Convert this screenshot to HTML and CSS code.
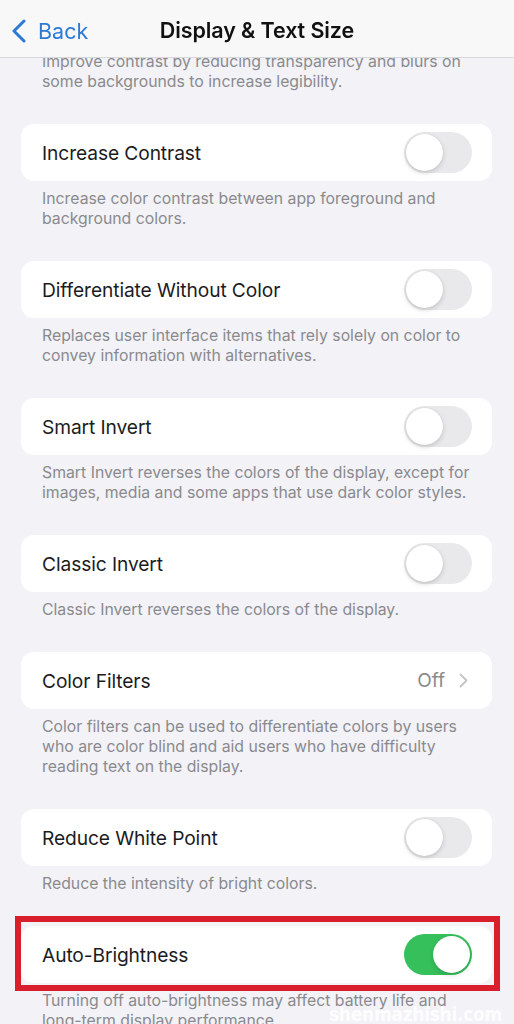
FILE: index.html
```html
<!DOCTYPE html>
<html lang="en">
<head>
<meta charset="utf-8">
<title>Display &amp; Text Size</title>
<link rel="stylesheet" href="styles.css">
</head>
<body>
<header class="navbar">
  <a class="back">
    <svg class="back-chevron" width="16" height="24" viewBox="0 0 16 24"><path d="M13 2 L3 12 L13 22" fill="none" stroke="currentColor" stroke-width="3" stroke-linecap="round" stroke-linejoin="round"/></svg>
    <span>Back</span>
  </a>
  <h1 class="title">Display &amp; Text Size</h1>
</header>

<main class="content">
  <p class="note">Improve contrast by reducing transparency and blurs on<br>some backgrounds to increase legibility.</p>

  <div class="card"><span class="label">Increase Contrast</span><span class="switch"></span></div>
  <p class="note">Increase color contrast between app foreground and<br>background colors.</p>

  <div class="card"><span class="label">Differentiate Without Color</span><span class="switch"></span></div>
  <p class="note">Replaces user interface items that rely solely on color to<br>convey information with alternatives.</p>

  <div class="card"><span class="label">Smart Invert</span><span class="switch"></span></div>
  <p class="note">Smart Invert reverses the colors of the display, except for<br>images, media and some apps that use dark color styles.</p>

  <div class="card"><span class="label">Classic Invert</span><span class="switch"></span></div>
  <p class="note">Classic Invert reverses the colors of the display.</p>

  <div class="card"><span class="label">Color Filters</span><span class="value">Off<svg class="chev" width="9" height="15" viewBox="0 0 9 15"><path d="M1.5 1.5 L7.5 7.5 L1.5 13.5" fill="none" stroke="currentColor" stroke-width="1.8" stroke-linecap="round" stroke-linejoin="round"/></svg></span></div>
  <p class="note">Color filters can be used to differentiate colors by users<br>who are color blind and aid users who have difficulty<br>reading text on the display.</p>

  <div class="card"><span class="label">Reduce White Point</span><span class="switch"></span></div>
  <p class="note">Reduce the intensity of bright colors.</p>

  <div class="card highlighted"><span class="label">Auto-Brightness</span><span class="switch on"></span></div>
  <p class="note">Turning off auto-brightness may affect battery life and<br>long-term display performance.</p>
</main>

<div class="watermark">shenmazhishi.com</div>
</body>
</html>
```

FILE: styles.css
```css
* { box-sizing: border-box; }
html, body {
  margin: 0;
  padding: 0;
}
body {
  width: 514px;
  height: 1024px;
  overflow: hidden;
  background: #f2f2f7;
  font-family: Inter, "Noto Sans", "Liberation Sans", sans-serif;
  color: #1c1c1e;
  position: relative;
}
.navbar {
  position: fixed;
  top: 0;
  left: 0;
  right: 0;
  height: 58px;
  background: rgba(248, 248, 249, 0.96);
  border-bottom: 1px solid #d8d8da;
  z-index: 5;
  display: flex;
  align-items: center;
}
.back {
  position: absolute;
  left: 11px;
  top: 18px;
  display: flex;
  align-items: center;
  gap: 11px;
  color: #2a7ad6;
  font-size: 21.5px;
}
.back-chevron { display: block; }
.title {
  margin: 0 auto;
  font-size: 21.5px;
  font-weight: 600;
  letter-spacing: -0.1px;
  color: #111;
  padding-top: 3px;
}
.content {
  padding-top: 52px;
}
.note {
  margin: 0;
  padding: 8px 10px 0 42px;
  margin-bottom: 32px;
  font-size: 15.8px;
  line-height: 20px;
  color: #8a8a8e;
  white-space: nowrap;
}
.content > .note:first-child { padding-top: 0; }
.card {
  position: relative;
  margin: 0 22px 0 21px;
  height: 57px;
  background: #fff;
  border-radius: 13px;
  display: flex;
  align-items: center;
  justify-content: space-between;
  padding: 0 20px 0 21px;
}
.label {
  font-size: 19.2px;
  letter-spacing: -0.1px;
  color: #1c1c1e;
}
.switch {
  position: relative;
  width: 68px;
  height: 41px;
  border-radius: 21px;
  background: #e9e9eb;
}
.switch::after {
  content: "";
  position: absolute;
  top: 2px;
  left: 2px;
  width: 37px;
  height: 37px;
  border-radius: 50%;
  background: #fff;
  box-shadow: 0 2px 5px rgba(0,0,0,0.16), 0 0 1px rgba(0,0,0,0.12);
}
.switch.on { background: #36c05c; }
.switch.on::after { left: 29px; }
.value {
  display: flex;
  align-items: center;
  gap: 14px;
  font-size: 19px;
  color: #8a8a8e;
  padding-right: 4px;
}
.chev { color: #c4c4c7; display: block; }
.highlighted::before {
  content: "";
  position: absolute;
  top: -10px;
  bottom: -8px;
  left: -6px;
  right: -8px;
  border: 6px solid #d91f2b;
  pointer-events: none;
}
.watermark {
  position: absolute;
  right: 12px;
  top: 1003px;
  font-family: "DejaVu Sans Condensed", "DejaVu Sans", sans-serif;
  font-weight: bold;
  font-size: 19px;
  color: rgba(255,255,255,0.9);
  letter-spacing: -0.3px;
}
```
